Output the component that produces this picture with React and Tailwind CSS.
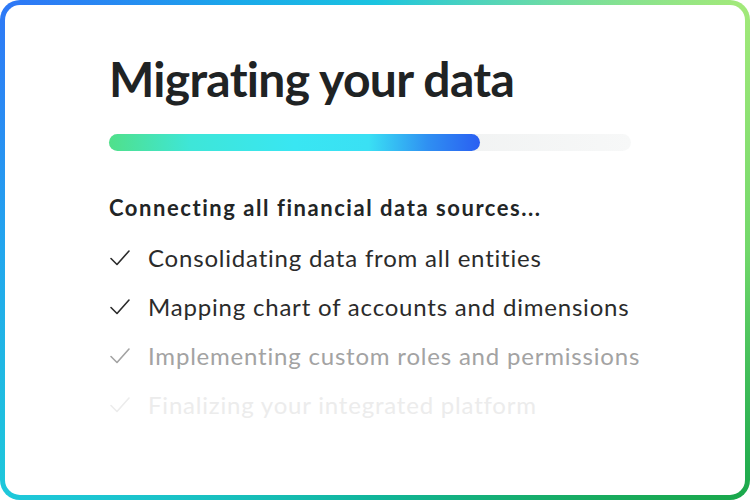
const steps = [
  { label: "Consolidating data from all entities", tone: "text-[#2b2b2b]" },
  { label: "Mapping chart of accounts and dimensions", tone: "text-[#2b2b2b]" },
  { label: "Implementing custom roles and permissions", tone: "text-[#a3a3a3]" },
  { label: "Finalizing your integrated platform", tone: "text-[#ececec]" },
];

function Check() {
  return (
    <svg width="22" height="18" viewBox="0 0 22 18" fill="none" className="shrink-0">
      <path d="M2 9.5 L8 15.5 L20 2" stroke="currentColor" strokeWidth="1.6" strokeLinecap="round" strokeLinejoin="round" />
    </svg>
  );
}

export default function App() {
  return (
    <div className="w-[750px] h-[500px] bg-white">
      <div className="w-full h-full rounded-[20px] p-[5px] bg-[conic-gradient(from_0deg,#1bc4e0_0deg,#5fd8b0_30deg,#a2e97a_56deg,#72d86a_90deg,#1aa84c_124deg,#10b59a_180deg,#1ec8da_236deg,#22a6ee_270deg,#2e78f6_304deg,#1aa8ea_330deg,#1bc4e0_360deg)]">
        <div className="w-full h-full rounded-[15px] bg-white pl-[104px] pt-[50px] font-['Lato',sans-serif]">
          <h1 className="text-[48px] leading-none font-bold tracking-[-0.7px] text-[#1f2324]">
            Migrating your data
          </h1>

          <div className="mt-[31px] w-[522px] h-[17px] rounded-full bg-gradient-to-r from-[#edefef] via-[#eef0f0] to-[#f7f8f8]">
            <div className="w-[371px] h-full rounded-full bg-[linear-gradient(to_right,#50e08a_0%,#3ee6d8_22%,#39e6f2_50%,#3ae0f4_70%,#2f8ff2_86%,#2a5ff2_100%)]" />
          </div>

          <p className="mt-[46px] text-[22px] leading-none font-bold tracking-[1.55px] text-[#222526]">
            Connecting all financial data sources...
          </p>

          <ul className="mt-[27px] flex flex-col gap-[25px]">
            {steps.map((s) => (
              <li key={s.label} className={`flex items-center gap-[17px] text-[24px] leading-[24px] tracking-[0.8px] ${s.tone}`}>
                <Check />
                <span>{s.label}</span>
              </li>
            ))}
          </ul>
        </div>
      </div>
    </div>
  );
}
